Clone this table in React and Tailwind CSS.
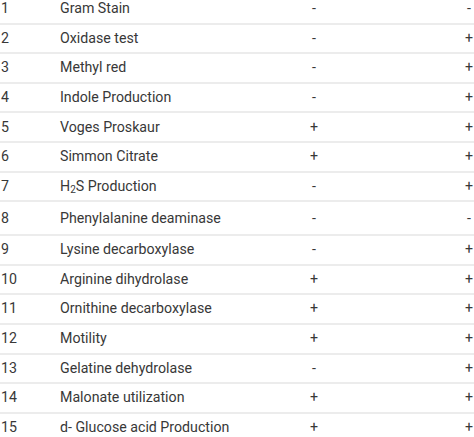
import React from "react";

const rows = [
  ["1", "Gram Stain", "-", "-"],
  ["2", "Oxidase test", "-", "+"],
  ["3", "Methyl red", "-", "+"],
  ["4", "Indole Production", "-", "+"],
  ["5", "Voges Proskaur", "+", "+"],
  ["6", "Simmon Citrate", "+", "+"],
  ["7", "H2S", "-", "+"],
  ["8", "Phenylalanine deaminase", "-", "-"],
  ["9", "Lysine decarboxylase", "-", "+"],
  ["10", "Arginine dihydrolase", "+", "+"],
  ["11", "Ornithine decarboxylase", "+", "+"],
  ["12", "Motility", "+", "+"],
  ["13", "Gelatine dehydrolase", "-", "+"],
  ["14", "Malonate utilization", "+", "+"],
  ["15", "d- Glucose acid Production", "+", "+"],
];

export default function App() {
  return (
    <div
      className="w-[474px] h-[437px] overflow-hidden bg-white text-[#383838] text-[14.2px]"
      style={{ fontFamily: "Roboto, 'Liberation Sans', sans-serif" }}
    >
      <div className="-mt-[5px]">
        {rows.map(([n, name, a, b], i) => (
          <div
            key={n}
            className={`flex items-center border-b-2 border-[#ececec] ${
              i === 7 ? "h-[34px]" : "h-[29.6px]"
            }`}
          >
            <div className="w-[60px] pl-[1px]">{n}</div>
            <div className="w-[222px]">
              {name === "H2S" ? (
                <span>
                  H<sub className="text-[10px]">2</sub>S Production
                </span>
              ) : (
                name
              )}
            </div>
            <div className="w-[64px] text-center">{a}</div>
            <div className="flex-1" />
            <div className="w-[20px] text-center -mr-[5px]">{b}</div>
          </div>
        ))}
      </div>
    </div>
  );
}
